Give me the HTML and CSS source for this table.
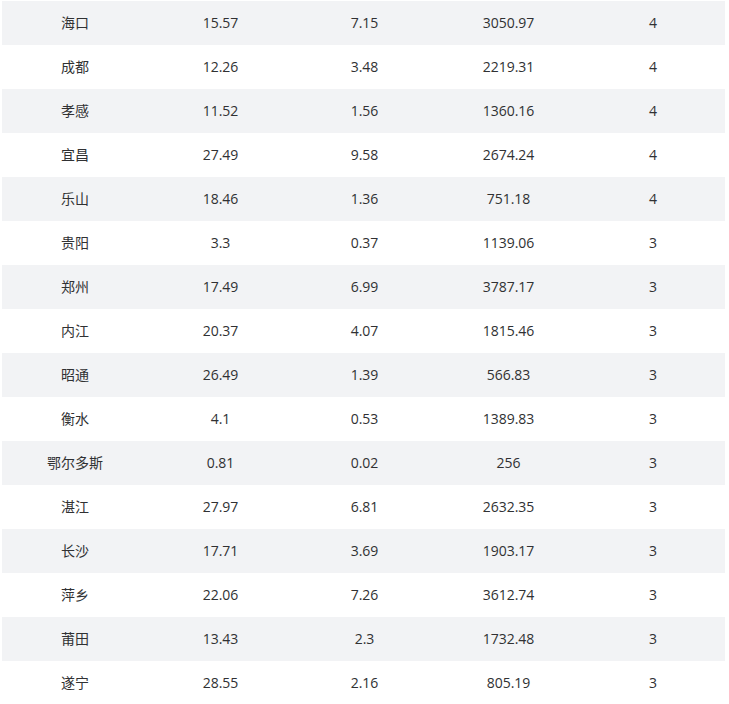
FILE: index.html
```html
<!DOCTYPE html>
<html lang="zh">
<head>
<meta charset="utf-8">
<link rel="stylesheet" href="styles.css">
</head>
<body>
<table class="data">
<colgroup>
<col class="c1"><col class="c2"><col class="c3"><col class="c4"><col class="c5">
</colgroup>
<tbody>
<tr><td>海口</td><td>15.57</td><td>7.15</td><td>3050.97</td><td>4</td></tr>
<tr><td>成都</td><td>12.26</td><td>3.48</td><td>2219.31</td><td>4</td></tr>
<tr><td>孝感</td><td>11.52</td><td>1.56</td><td>1360.16</td><td>4</td></tr>
<tr><td>宜昌</td><td>27.49</td><td>9.58</td><td>2674.24</td><td>4</td></tr>
<tr><td>乐山</td><td>18.46</td><td>1.36</td><td>751.18</td><td>4</td></tr>
<tr><td>贵阳</td><td>3.3</td><td>0.37</td><td>1139.06</td><td>3</td></tr>
<tr><td>郑州</td><td>17.49</td><td>6.99</td><td>3787.17</td><td>3</td></tr>
<tr><td>内江</td><td>20.37</td><td>4.07</td><td>1815.46</td><td>3</td></tr>
<tr><td>昭通</td><td>26.49</td><td>1.39</td><td>566.83</td><td>3</td></tr>
<tr><td>衡水</td><td>4.1</td><td>0.53</td><td>1389.83</td><td>3</td></tr>
<tr><td>鄂尔多斯</td><td>0.81</td><td>0.02</td><td>256</td><td>3</td></tr>
<tr><td>湛江</td><td>27.97</td><td>6.81</td><td>2632.35</td><td>3</td></tr>
<tr><td>长沙</td><td>17.71</td><td>3.69</td><td>1903.17</td><td>3</td></tr>
<tr><td>萍乡</td><td>22.06</td><td>7.26</td><td>3612.74</td><td>3</td></tr>
<tr><td>莆田</td><td>13.43</td><td>2.3</td><td>1732.48</td><td>3</td></tr>
<tr><td>遂宁</td><td>28.55</td><td>2.16</td><td>805.19</td><td>3</td></tr>
</tbody>
</table>
</body>
</html>
```
FILE: styles.css
```css
html, body {
  margin: 0;
  padding: 0;
  background: #ffffff;
}
body {
  padding: 1px 4px 0 2px;
  font-family: "Open Sans", "Noto Sans CJK SC", sans-serif;
  font-size: 14px;
  color: #303133;
}
.data {
  width: 723px;
  border-collapse: collapse;
  table-layout: fixed;
}
.c1 { width: 146px; }
.c2 { width: 145px; }
.c3 { width: 143px; }
.c4 { width: 145px; }
.c5 { width: 144px; }
.data td {
  height: 44px;
  padding: 0;
  text-align: center;
  vertical-align: middle;
  line-height: 20px;
}
.data tr:nth-child(odd) td {
  background: #f2f3f5;
}
```
